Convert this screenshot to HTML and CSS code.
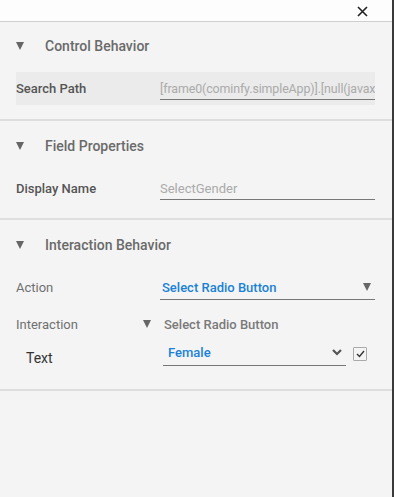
FILE: index.html
```
<html>
	<head>
		<title>Properties</title>
		<meta charset="utf-8">
		<link rel="stylesheet" href="styles.css">
	</head>
	<body>
		<div id="panel">
			<div id="topBar">
				<svg class="closeIcon" width="11" height="11" viewBox="0 0 11 11">
					<path d="M1 1 L10 10 M10 1 L1 10" stroke="#222" stroke-width="1.6"/>
				</svg>
			</div>

			<div class="section first">
				<div class="sectionHeader"><span class="caret"></span>Control Behavior</div>
				<div class="row shaded firstRow">
					<span class="label strong">Search Path</span>
					<div class="field"><span class="value muted path">[frame0(cominfy.simpleApp)].[null(javax</span></div>
				</div>
			</div>

			<div class="section second">
				<div class="sectionHeader"><span class="caret"></span>Field Properties</div>
				<div class="row firstRow">
					<span class="label strong">Display Name</span>
					<div class="field"><span class="value muted">SelectGender</span></div>
				</div>
			</div>

			<div class="section third">
				<div class="sectionHeader"><span class="caret"></span>Interaction Behavior</div>
				<div class="row firstRow">
					<span class="label">Action</span>
					<div class="field action"><span class="value blue">Select Radio Button</span><span class="caret small"></span></div>
				</div>
				<div class="row interactionRow">
					<span class="label">Interaction</span>
					<div class="interaction"><span class="caret"></span><span>Select Radio Button</span></div>
				</div>
				<div class="row textRow">
					<span class="label dark">Text</span>
					<div class="field select"><span class="value blue">Female</span>
						<svg class="chevron" width="10" height="7" viewBox="0 0 10 7">
							<path d="M1 1 L5 5 L9 1" stroke="#555" stroke-width="2.2" fill="none"/>
						</svg>
					</div>
					<div class="checkbox">
						<svg width="9" height="8" viewBox="0 0 9 8">
							<path d="M1 4 L3.5 6.5 L8 1" stroke="#333" stroke-width="1.4" fill="none"/>
						</svg>
					</div>
				</div>
			</div>
		</div>
	</body>
</html>
```

FILE: styles.css
```
body {
	margin: 0;
	background-color: #f4f4f4;
	font-family: Roboto, "Liberation Sans", sans-serif;
	width: 394px;
	height: 497px;
	overflow: hidden;
}

#panel {
	width: 392px;
	height: 497px;
	border-right: 2px solid #3a3a3a;
}

#topBar {
	height: 21px;
	background-color: #fdfdfd;
	border-bottom: 1px solid #cfcfcf;
	display: flex;
	justify-content: flex-end;
	align-items: center;
}

.closeIcon {
	margin-right: 24px;
	margin-top: 1px;
}

.section {
	padding: 14px 17px 14px 16px;
	border-bottom: 2px solid #dedede;
}

.section.second {
	padding-top: 15px;
	padding-bottom: 13px;
}

.section.third {
	padding-top: 15px;
	padding-bottom: 13px;
}

.sectionHeader {
	height: 20px;
	display: flex;
	align-items: center;
	font-size: 14px;
	font-weight: 500;
	color: #6a6a6a;
}

.caret {
	width: 0;
	height: 0;
	border-left: 4.5px solid transparent;
	border-right: 4.5px solid transparent;
	border-top: 8px solid #666;
	margin-right: 21px;
}

.caret.small {
	margin-right: 4px;
	margin-left: auto;
}

.row {
	display: flex;
	align-items: center;
	height: 33px;
}

.firstRow {
	margin-top: 16px;
}

.shaded {
	background-color: #ebebeb;
}

.label {
	width: 144px;
	flex-shrink: 0;
	font-size: 13px;
	color: #707070;
}

.label.strong {
	font-weight: 500;
	color: #555;
}

.label.dark {
	width: 137px;
	padding-left: 10px;
	font-size: 14px;
	color: #333;
	margin-top: 6px;
}

.field {
	flex: 1;
	min-width: 0;
	height: 22px;
	display: flex;
	align-items: center;
	border-bottom: 1px solid #777;
	overflow: hidden;
}

.field.action {
	height: 24px;
}

.value {
	font-size: 13px;
	white-space: nowrap;
}

.value.path {
	font-size: 12.4px;
	letter-spacing: -0.1px;
}

.muted {
	color: #aaa;
}

.blue {
	color: #1a82d6;
	font-weight: 500;
	padding-left: 2px;
}

.interactionRow {
	height: 40px;
	margin-top: 0;
}

.interaction {
	display: flex;
	align-items: center;
	margin-left: -17px;
	font-size: 13px;
	font-weight: 500;
	color: #7a7a7a;
}

.interaction .caret {
	margin-right: 13px;
}

.textRow {
	height: 28px;
	margin-top: -3px;
	margin-bottom: 7px;
}

.field.select {
	flex: 0 0 183px;
	height: 24px;
	margin-top: -4px;
}

.field.select .value {
	padding-left: 5px;
}

.chevron {
	margin-left: auto;
	margin-right: 4px;
}

.checkbox {
	width: 12px;
	height: 12px;
	border: 1px solid #aaa;
	border-radius: 1px;
	margin-left: 7px;
	margin-top: -2px;
	display: flex;
	align-items: center;
	justify-content: center;
}
```
